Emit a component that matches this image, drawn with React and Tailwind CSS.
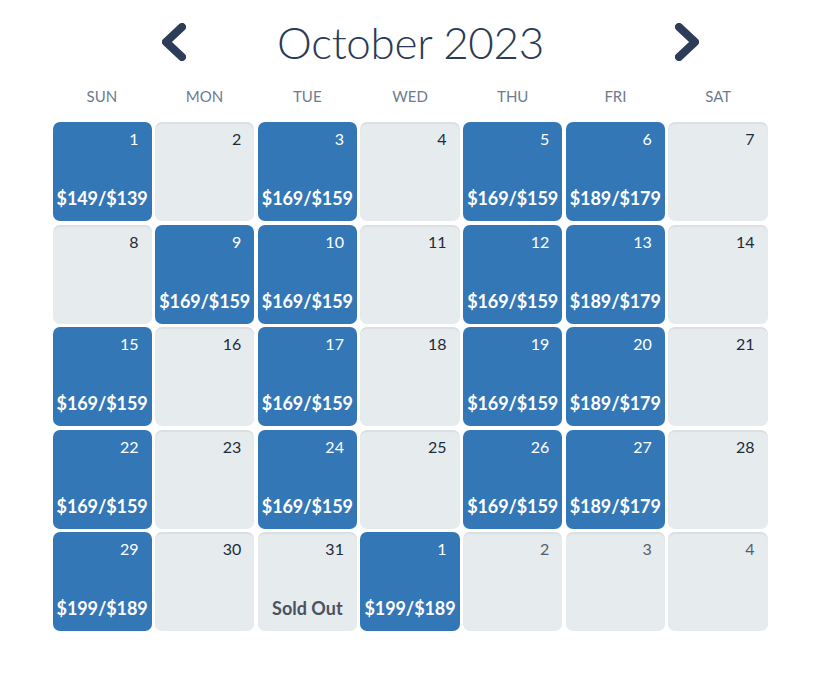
import React from "react";

const days = ["SUN", "MON", "TUE", "WED", "THU", "FRI", "SAT"];

const cells = [
  { d: 1, p: "$149/$139" }, { d: 2 }, { d: 3, p: "$169/$159" }, { d: 4 }, { d: 5, p: "$169/$159" }, { d: 6, p: "$189/$179" }, { d: 7 },
  { d: 8 }, { d: 9, p: "$169/$159" }, { d: 10, p: "$169/$159" }, { d: 11 }, { d: 12, p: "$169/$159" }, { d: 13, p: "$189/$179" }, { d: 14 },
  { d: 15, p: "$169/$159" }, { d: 16 }, { d: 17, p: "$169/$159" }, { d: 18 }, { d: 19, p: "$169/$159" }, { d: 20, p: "$189/$179" }, { d: 21 },
  { d: 22, p: "$169/$159" }, { d: 23 }, { d: 24, p: "$169/$159" }, { d: 25 }, { d: 26, p: "$169/$159" }, { d: 27, p: "$189/$179" }, { d: 28 },
  { d: 29, p: "$199/$189" }, { d: 30 }, { d: 31, sold: true }, { d: 1, p: "$199/$189" }, { d: 2, next: true }, { d: 3, next: true }, { d: 4, next: true },
];

function Chevron({ dir }) {
  return (
    <svg width="30" height="40" viewBox="0 0 30 40" className="block">
      <path
        d={dir === "left" ? "M23 5 L7 20 L23 35" : "M7 5 L23 20 L7 35"}
        fill="none"
        stroke="#2d3d58"
        strokeWidth="8"
        strokeLinecap="round"
        strokeLinejoin="round"
        style={{ filter: "blur(0.6px)" }}
      />
    </svg>
  );
}

function Cell({ c }) {
  if (c.p) {
    return (
      <div className="h-[99px] rounded-[7px] bg-[#3477b7] flex flex-col justify-between pt-[5px] pb-[12px]">
        <div className="text-right pr-[13px] text-[16px] text-white leading-[24px]">{c.d}</div>
        <div className="text-center text-[18px] font-bold text-white leading-[22px] tracking-[-0.1px]">{c.p}</div>
      </div>
    );
  }
  return (
    <div className="h-[99px] rounded-[7px] bg-[#e6ebee] shadow-[inset_0_2px_1px_rgba(0,0,0,0.05)] flex flex-col justify-between pt-[5px] pb-[12px]">
      <div className={`text-right pr-[13px] text-[16px] leading-[24px] ${c.next ? "text-[#56606b]" : "text-[#1e2b3b]"}`}>{c.d}</div>
      {c.sold ? (
        <div className="text-center text-[18px] font-bold text-[#4a5361] leading-[22px]">Sold Out</div>
      ) : (
        <div className="h-[22px]" />
      )}
    </div>
  );
}

export default function App() {
  return (
    <div className="w-[820px] h-[674px] bg-white" style={{ fontFamily: "Lato, 'Noto Sans', sans-serif" }}>
      <div className="w-[715px] mx-auto pt-[18px]">
        <div className="flex items-center h-[48px]">
          <div className="w-[106px] shrink-0" />
          <Chevron dir="left" />
          <div className="w-[444px] shrink-0 text-center text-[44px] font-light text-[#2b3a55] leading-[48px] tracking-[-0.3px]">October 2023</div>
          <div className="w-[39px] shrink-0" />
          <Chevron dir="right" />
        </div>
        <div className="grid grid-cols-7 gap-x-[4px] mt-[20px] h-[36px]">
          {days.map((d) => (
            <div key={d} className="text-center text-[15px] text-[#6d7b8f] leading-[20px]">{d}</div>
          ))}
        </div>
        <div className="grid grid-cols-7 gap-[3.5px]">
          {cells.map((c, i) => (
            <Cell key={i} c={c} />
          ))}
        </div>
      </div>
    </div>
  );
}
